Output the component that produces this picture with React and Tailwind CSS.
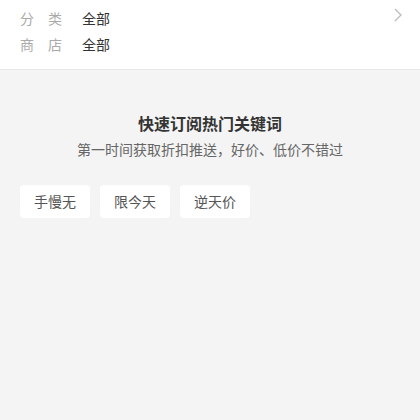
import React from 'react'

export default function App() {
  const tags = ['手慢无', '限今天', '逆天价']
  return (
    <div className="w-[420px] h-[420px] bg-[#f4f4f4]" style={{ fontFamily: '"Noto Sans CJK SC", sans-serif' }}>
      <div className="relative bg-white border-b border-[#e8e8e8] h-[70px] pt-[5px] px-5">
        <div className="flex items-center h-[26px] text-[14px]">
          <span className="w-[62px] text-[#aaa] tracking-[14px]">分类</span>
          <span className="text-[#333]">全部</span>
        </div>
        <div className="flex items-center h-[27px] text-[14px]">
          <span className="w-[62px] text-[#aaa] tracking-[14px]">商店</span>
          <span className="text-[#333]">全部</span>
        </div>
        <svg className="absolute right-[18px] top-[8px]" width="8" height="14" viewBox="0 0 8 14" fill="none">
          <path d="M1 1l6 6-6 6" stroke="#bbb" strokeWidth="1.3" />
        </svg>
      </div>
      <div className="flex flex-col items-center pt-[42px]">
        <div className="text-[16px] font-bold text-[#333] leading-[22px]">快速订阅热门关键词</div>
        <div className="text-[14px] text-[#666] leading-[22px] mt-[4px]">第一时间获取折扣推送，好价、低价不错过</div>
      </div>
      <div className="flex gap-[10px] px-5 mt-[25px]">
        {tags.map(t => (
          <div key={t} className="w-[70px] h-[33px] bg-white rounded-[4px] flex items-center justify-center text-[14px] text-[#555]">{t}</div>
        ))}
      </div>
    </div>
  )
}
